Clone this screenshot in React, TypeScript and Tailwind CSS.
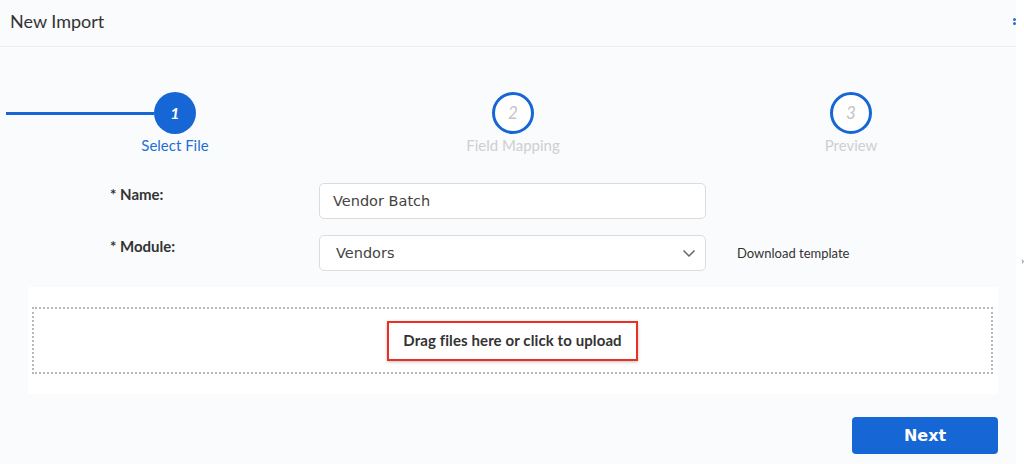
import React from "react";

const BLUE = "bg-[#1766d6]";

function Step({ n, label, active, lineLeft }: { n: number; label: string; active?: boolean; lineLeft?: boolean }) {
  return (
    <div className="flex flex-col items-center">
      <div className="flex w-full items-center">
        <div className={`h-[3px] flex-1 ${lineLeft ? BLUE : ""}`} />
        <div
          className={
            active
              ? "flex h-[42px] w-[42px] items-center justify-center rounded-full bg-[#1766d6] text-[16px] font-bold italic text-white"
              : "flex h-[42px] w-[42px] items-center justify-center rounded-full border-[3px] border-[#1766d6] bg-white text-[17px] italic text-[#c4c4c4]"
          }
        >
          {n}
        </div>
        <div className="h-[3px] flex-1" />
      </div>
      <div
        className={`mt-[1px] text-[15px] leading-[20px] ${active ? "text-[#1f6fd6]" : "text-[#cfcfcf]"}`}
      >
        {label}
      </div>
    </div>
  );
}

export default function App() {
  return (
    <div
      className="flex h-[464px] w-[1024px] overflow-hidden bg-white text-[#333]"
      style={{ fontFamily: "Lato, 'Noto Sans', sans-serif" }}
    >
      <div className="flex w-[1016px] flex-col bg-[#fafbfc]">
        {/* header */}
        <div className="flex h-[47px] items-center justify-between border-b border-[#eceef0] pl-[10px]">
          <div className="mb-[5px] text-[18px] leading-[22px] text-[#333]">New Import</div>
          <div className="mb-[4px] flex flex-col gap-[1px]">
            <div className="h-[3px] w-[3px] rounded-full bg-[#2a6fc9]" />
            <div className="h-[3px] w-[3px] rounded-full bg-[#2a6fc9]" />
          </div>
        </div>

        {/* stepper */}
        <div className="ml-[6px] mt-[45px] grid w-[1014px] grid-cols-3">
          <Step n={1} label="Select File" active lineLeft />
          <Step n={2} label="Field Mapping" />
          <Step n={3} label="Preview" />
        </div>

        {/* form */}
        <div className="mt-[28px] flex flex-col gap-[16px] pl-[110px]">
          <div className="flex items-start">
            <div className="w-[209px] pt-[1px] text-[15px] font-bold leading-[20px] text-[#333]">* Name:</div>
            <div
              className="flex h-[36px] w-[387px] items-center rounded-[5px] border border-[#dcdcdc] bg-white pl-[13px] text-[14.5px] text-[#444]"
              style={{ fontFamily: "'DejaVu Sans', Verdana, sans-serif" }}
            >
              <span className="mt-[1px]">Vendor Batch</span>
            </div>
          </div>
          <div className="flex items-start">
            <div className="w-[209px] pt-[1px] text-[15px] font-bold leading-[20px] text-[#333]">* Module:</div>
            <div
              className="flex h-[36px] w-[387px] items-center justify-between rounded-[5px] border border-[#dcdcdc] bg-white pl-[16px] pr-[9px] text-[14.5px] text-[#444]"
              style={{ fontFamily: "'DejaVu Sans', Verdana, sans-serif" }}
            >
              <span className="mt-[1px]">Vendors</span>
              <svg width="14" height="9" viewBox="0 0 14 9" fill="none">
                <path d="M1.5 1.5 L7 7 L12.5 1.5" stroke="#666" strokeWidth="1.5" />
              </svg>
            </div>
            <div className="ml-[31px] mt-[1px] self-center text-[13px] text-[#333]">Download template</div>
          </div>
        </div>

        {/* drop zone card */}
        <div className="ml-[28px] mt-[16px] w-[970px] bg-white px-[4px] py-[20px]">
          <div className="flex h-[67px] w-[961px] items-center justify-center border-2 border-dotted border-[#b8b8b8]">
            <div className="flex h-[40px] items-center border-2 border-[#ec2f25] px-[14px] text-[15px] font-bold tracking-[0.1px] text-[#333] shadow-[0_1px_3px_rgba(0,0,0,0.25)]">
              Drag files here or click to upload
            </div>
          </div>
        </div>

        {/* footer */}
        <div className="mt-[23px] flex justify-end pr-[18px]">
          <button
            className="h-[37px] w-[146px] rounded-[4px] bg-[#1766d6] text-[16px] font-bold text-white"
            style={{ fontFamily: "'DejaVu Sans', Verdana, sans-serif" }}
          >
            Next
          </button>
        </div>
      </div>

      {/* right strip */}
      <div className="flex w-[8px] flex-col items-end bg-white">
        <div className="mt-[255px] text-[10px] leading-[10px] text-[#555]">›</div>
      </div>
    </div>
  );
}
